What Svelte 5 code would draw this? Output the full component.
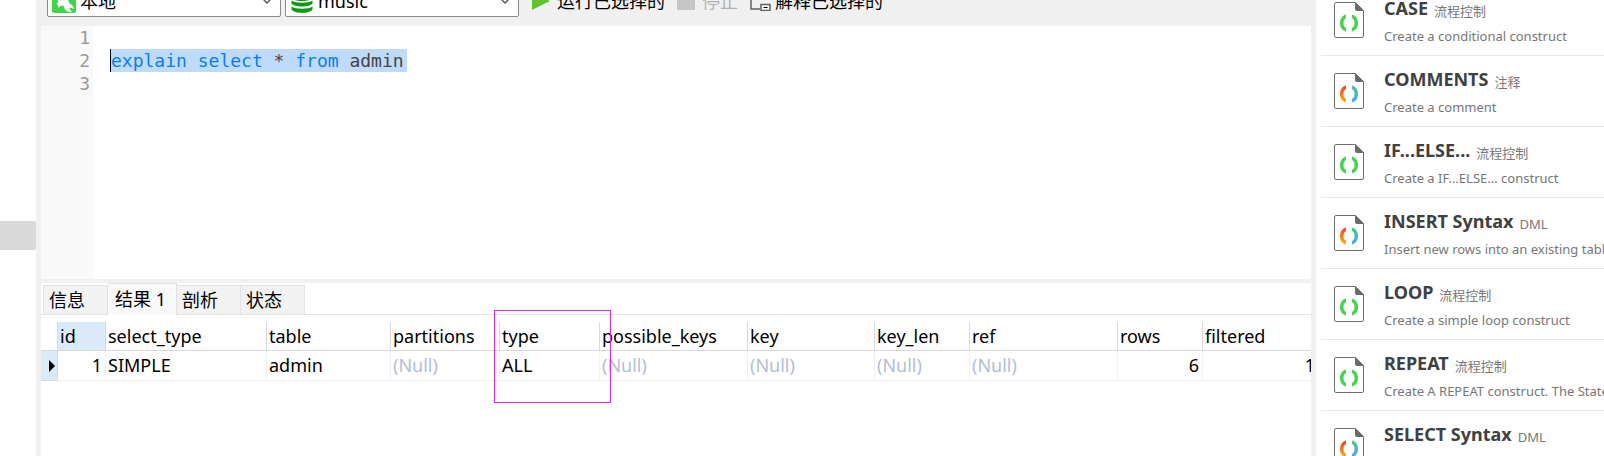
<script lang="ts">
  let connection = "本地";
  let database = "music";
  let activeTab = 1;
  let activeSnippet = -1;

  const tabs = ["信息", "结果 1", "剖析", "状态"];

  const columns = [
    { name: "id", width: 48, value: "1", numeric: true },
    { name: "select_type", width: 161, value: "SIMPLE" },
    { name: "table", width: 124, value: "admin" },
    { name: "partitions", width: 109, value: null },
    { name: "type", width: 100, value: "ALL" },
    { name: "possible_keys", width: 148, value: null },
    { name: "key", width: 127, value: null },
    { name: "key_len", width: 95, value: null },
    { name: "ref", width: 148, value: null },
    { name: "rows", width: 85, value: "6", numeric: true },
    { name: "filtered", width: 162, value: "100.00", numeric: true },
  ];

  const tableWidth = columns.reduce((sum, c) => sum + c.width, 17);

  const snippets = [
    { title: "CASE", kind: "流程控制", text: "Create a conditional construct", flow: true },
    { title: "COMMENTS", kind: "注释", text: "Create a comment", flow: false },
    { title: "IF...ELSE...", kind: "流程控制", text: "Create a IF...ELSE... construct", flow: true },
    { title: "INSERT Syntax", kind: "DML", text: "Insert new rows into an existing table", flow: false },
    { title: "LOOP", kind: "流程控制", text: "Create a simple loop construct", flow: true },
    { title: "REPEAT", kind: "流程控制", text: "Create A REPEAT construct. The Statement", flow: true },
    { title: "SELECT Syntax", kind: "DML", text: "Retrieve rows from a table", flow: false },
  ];
</script>

<svg class="defs" aria-hidden="true">
  <defs>
    <linearGradient id="warm" x1="0" y1="0" x2="0" y2="1">
      <stop offset="0" stop-color="#f83a2c" />
      <stop offset="1" stop-color="#ffb400" />
    </linearGradient>
    <linearGradient id="cool" x1="0" y1="0" x2="0" y2="1">
      <stop offset="0" stop-color="#45cf7c" />
      <stop offset="1" stop-color="#4ba6ff" />
    </linearGradient>
  </defs>
</svg>

<div class="app">
  <nav class="tree">
    <div class="tree-item"></div>
  </nav>

  <main>
    <div class="toolbar">
      <label class="picker">
        <svg width="24" height="24" viewBox="0 0 24 24">
          <rect width="24" height="24" rx="2" fill="#3fd64a" />
          <path d="M4 4C9 2 15 6 17 13.500c1 2 5 3 5 6.500-2-1-3.500-1.500-4.500-1 .5 2 1.500 3.500 3.500 4-5 .5-8.500-1.500-9-5.500-2-1.500-3.500-1.500-5.500 1.500 0-2.500-1-3-2-4.500 1.500-.5 2-1 1.500-2.500C5 9.500 3 7 4 4z" fill="#fff" />
        </svg>
        <select bind:value={connection} aria-label="connection">
          <option>本地</option>
        </select>
        <svg class="chevron" width="10" height="7" viewBox="0 0 10 7">
          <path d="M1 1l4 4 4-4" fill="none" stroke="#555" stroke-width="1.4" />
        </svg>
      </label>
      <label class="picker">
        <svg width="24" height="24" viewBox="0 0 24 24">
          <g fill="#0c9a12">
            <ellipse cx="12" cy="3" rx="10.5" ry="3" />
            <path d="M1.500 5c4 3 17 3 21 0v4c-3 4-18 4-21 0z" />
            <path d="M1.500 11.500c4 3 17 3 21 0v3c-3 4-18 4-21 0z" />
            <path d="M1.500 17.500c4 3 17 3 21 0v3c-3 4.500-18 4.500-21 0z" />
          </g>
        </svg>
        <select bind:value={database} aria-label="database">
          <option>music</option>
        </select>
        <svg class="chevron" width="10" height="7" viewBox="0 0 10 7">
          <path d="M1 1l4 4 4-4" fill="none" stroke="#555" stroke-width="1.4" />
        </svg>
      </label>
      <div class="actions">
        <button>
          <svg width="21" height="20" viewBox="0 0 21 20">
            <path d="M0 1l18 9-18 9z" fill="#62c22e" />
          </svg>
          运行已选择的
        </button>
        <button disabled>
          <svg width="21" height="20" viewBox="0 0 21 20">
            <path d="M0 1h18v18H0z" fill="#c6c6c6" />
          </svg>
          停止
        </button>
        <button>
          <svg width="21" height="20" viewBox="0 0 21 20">
            <path d="M1 0v18h9" fill="none" stroke="#606060" stroke-width="1.5" />
            <path d="M11 13.500h9v6h-9z" fill="#fff" stroke="#606060" stroke-width="1.500" />
            <path d="M13.500 16.500h4" stroke="#000" />
          </svg>
          解释已选择的
        </button>
      </div>
    </div>

    <div class="editor">
      <div class="gutter">
        <div>1</div>
        <div>2</div>
        <div>3</div>
      </div>
      <div class="code" role="textbox" aria-multiline="true" aria-label="query" tabindex="0" contenteditable="true" spellcheck="false">
        <div><br /></div>
        <div><span class="selected"><b>explain</b> <b>select</b> * <b>from</b> admin</span></div>
        <div><br /></div>
      </div>
    </div>

    <section class="results">
      <div class="tabs" role="tablist">
        {#each tabs as tab, i}
          <button role="tab" aria-selected={activeTab === i} class:active={activeTab === i} on:click={() => (activeTab = i)}>{tab}</button>
        {/each}
      </div>

      <div class="grid">
        <table style="width: {tableWidth}px">
          <colgroup>
            <col class="marker-col" />
            {#each columns as col}
              <col style="width: {col.width}px" />
            {/each}
          </colgroup>
          <thead>
            <tr>
              <td></td>
              {#each columns as col, i}
                <th class:current={i === 0}>
                  {col.name}
                  {#if col.name === "type"}<span class="callout"></span>{/if}
                </th>
              {/each}
            </tr>
          </thead>
          <tbody>
            <tr>
              <td class="marker">
                <svg width="6" height="12" viewBox="0 0 6 12"><path d="M0 0l6 6-6 6z" fill="#000" /></svg>
              </td>
              {#each columns as col}
                <td class:numeric={col.numeric} class:null={col.value === null}>{col.value ?? "(Null)"}</td>
              {/each}
            </tr>
          </tbody>
        </table>
      </div>
    </section>
  </main>

  <aside>
    <ul>
      {#each snippets as s, i}
        <li>
          <button class="snippet" class:picked={activeSnippet === i} on:click={() => (activeSnippet = i)}>
            <svg width="30" height="36" viewBox="0 0 30 36">
              <path d="M21.500 .5H2A1.500 1.500 0 0 0 .5 2v32A1.500 1.500 0 0 0 2 35.500h26a1.500 1.500 0 0 0 1.500-1.500V8.500z" fill="#fff" stroke="#707070" />
              <path d="M21 0l9 9h-7a2 2 0 0 1-2-2z" fill="#6b6b6b" />
              <path d="M12 12.500C8 13.500 6 17 6 21s2 7.500 6 8.500v-3.500c-2-1-2.500-3-2.500-5s.5-4 2.500-5z" fill={s.flow ? "#41d64c" : "url(#warm)"} />
              <path d="M18 12.500c4 1 6 4.500 6 8.500s-2 7.500-6 8.500v-3.500c2-1 2.500-3 2.500-5s-.5-4-2.500-5z" fill={s.flow ? "#41d64c" : "url(#cool)"} />
            </svg>
            <span class="info">
              <span class="head"><strong>{s.title}</strong><small>{s.kind}</small></span>
              <span class="text">{s.text}</span>
            </span>
          </button>
        </li>
      {/each}
    </ul>
  </aside>
</div>

<style>
  :global(body) {
    margin: 0;
    overflow: hidden;
  }

  .defs {
    position: absolute;
    width: 0;
    height: 0;
  }

  .app {
    display: flex;
    height: 100vh;
    background: #fff;
    color: #000;
    font-family: "Noto Sans", "Noto Sans CJK SC", sans-serif;
    font-size: 18px;
  }

  button,
  select {
    font: inherit;
    color: inherit;
    background: none;
    border: 0;
    margin: 0;
    padding: 0;
  }

  .tree {
    flex: 0 0 36px;
    padding-top: 221px;
  }

  .tree-item {
    height: 29px;
    background: #d9d9d9;
    border-radius: 0 2px 2px 0;
  }

  main {
    flex: 1;
    min-width: 0;
    display: flex;
    flex-direction: column;
    padding: 0 5px;
    background: #f0f0f0;
  }

  .toolbar {
    flex: none;
    box-sizing: border-box;
    height: 26px;
    padding: 0 0 9px 6px;
    display: flex;
    align-items: flex-end;
    gap: 4px;
    overflow: hidden;
  }

  .picker {
    flex: none;
    box-sizing: border-box;
    width: 234px;
    height: 32px;
    padding: 0 8px 0 4px;
    display: flex;
    align-items: center;
    gap: 4px;
    background: #fff;
    border: 1px solid #8a8a8a;
    border-radius: 2px;
  }

  .picker select {
    flex: 1;
    appearance: none;
    height: 28px;
    outline: none;
  }

  .actions {
    display: flex;
    gap: 12px;
    padding: 0 0 4px 9px;
  }

  .actions button {
    flex: none;
    display: flex;
    align-items: center;
    gap: 4px;
    line-height: 24px;
    white-space: nowrap;
  }

  .actions button:disabled {
    color: #b0b0b0;
  }

  .editor {
    flex: none;
    display: flex;
    height: 253px;
    background: #fff;
    font-family: "DejaVu Sans Mono", monospace;
    line-height: 23px;
  }

  .gutter {
    flex: 0 0 52px;
    box-sizing: border-box;
    padding-right: 3px;
    text-align: right;
    color: #999;
    background: #f9f9f9;
  }

  .code {
    flex: 1;
    padding-left: 17px;
    color: #444;
    outline: none;
  }

  .code b {
    font-weight: 400;
    color: #087dff;
  }

  .selected {
    display: inline-block;
    padding: 0 3px 0 1px;
    background: #bedbfb;
    box-shadow: inset 1px 0 #000;
  }

  .results {
    flex: 1;
    min-height: 0;
    margin-top: 4px;
    background: #fff;
  }

  .tabs {
    display: flex;
    align-items: flex-end;
    height: 31px;
    padding-left: 2px;
    border-bottom: 1px solid #e2e2e2;
  }

  .tabs button {
    box-sizing: border-box;
    height: 29px;
    width: 64px;
    padding: 0 5px;
    text-align: left;
    line-height: 28px;
    background: #f2f2f2;
    border: 1px solid #e2e2e2;
    border-width: 1px 1px 0 0;
    white-space: nowrap;
  }

  .tabs button:first-child {
    width: 65px;
    border-left-width: 1px;
  }

  .tabs button.active {
    width: 69px;
    height: 32px;
    margin-bottom: -1px;
    padding: 0 0 2px 7px;
    background: #f9f9f9;
  }

  .grid {
    padding-top: 7px;
    overflow-x: clip;
  }

  table {
    table-layout: fixed;
    border-collapse: separate;
    border-spacing: 0;
  }

  .marker-col {
    width: 17px;
  }

  th,
  td {
    box-sizing: border-box;
    padding: 0 4px 0 2px;
    text-align: left;
    font-weight: 400;
    line-height: 28px;
    white-space: nowrap;
    border-right: 1px solid #efefef;
    border-bottom: 1px solid #efefef;
  }

  thead th,
  thead td {
    position: relative;
    height: 29px;
    border-color: #d9d9d9;
  }

  thead td {
    border-color: transparent #d9d9d9 #d9d9d9;
  }

  tbody td {
    height: 30px;
    padding-bottom: 1px;
  }

  th.current {
    background: #d9eaf9;
  }

  td.marker {
    padding: 0 2px 0 8px;
    line-height: 12px;
    background: #d9eaf9;
    border-color: #d9d9d9;
  }

  .marker svg {
    display: block;
  }

  td.numeric {
    padding-right: 3px;
    text-align: right;
  }

  .null {
    color: #b4bdd6;
  }

  .callout {
    position: absolute;
    z-index: 1;
    top: -12px;
    left: -6px;
    box-sizing: border-box;
    width: 117px;
    height: 93px;
    border: 1px solid #f01ee6;
    pointer-events: none;
  }

  aside {
    flex: 0 0 288px;
    box-sizing: border-box;
    padding-left: 5px;
    overflow: hidden;
  }

  ul {
    list-style: none;
    margin: -15px 0 0;
    padding: 0;
  }

  li {
    border-bottom: 1px solid #e8e8e8;
  }

  .snippet {
    display: flex;
    gap: 20px;
    width: 100%;
    height: 70px;
    padding: 11px 0 0 13px;
    text-align: left;
    white-space: nowrap;
  }

  .snippet.picked {
    background: #f5f5f5;
  }

  .snippet svg {
    flex: none;
    margin-top: 6px;
  }

  .info {
    display: flex;
    flex-direction: column;
  }

  .head {
    display: flex;
    gap: 6px;
    line-height: 24px;
  }

  .head strong {
    font-size: 18px;
    color: #404040;
  }

  .head small {
    padding-top: 3px;
    font-size: 13px;
    color: #777;
  }

  .text {
    margin-top: 3px;
    font-size: 13px;
    line-height: 20px;
    color: #777;
  }
</style>
